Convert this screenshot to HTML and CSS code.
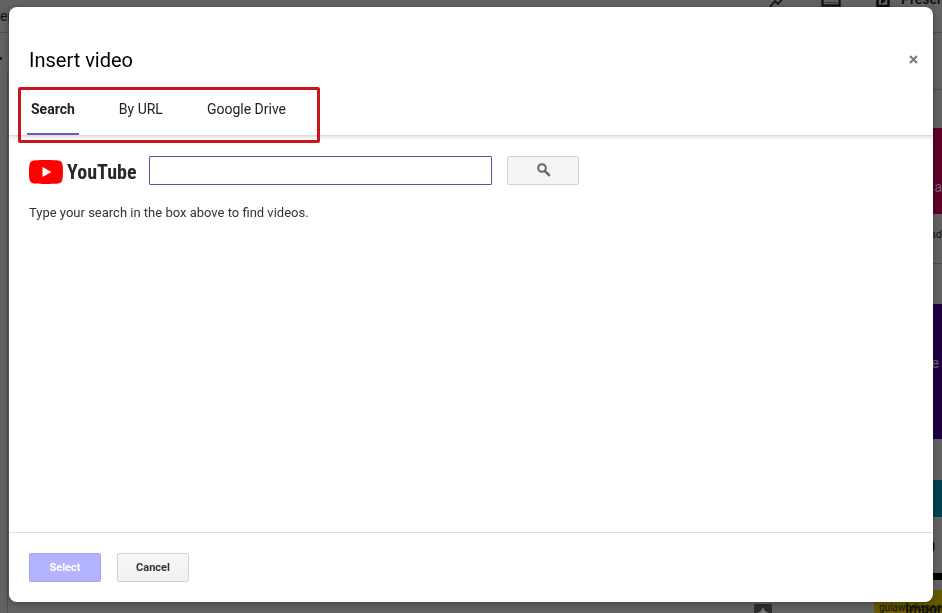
FILE: index.html
```html
<!DOCTYPE html>
<html lang="en">
<head>
    <meta charset="UTF-8">
    <meta name="viewport" content="width=device-width, initial-scale=1.0">
    <title>Insert video</title>
    <link rel="stylesheet" href="styles.css">
</head>
<body>
    <!-- Editor behind the dialog -->
    <div class="app" aria-hidden="true">
        <div class="app-menu">
            <span class="menu-text">er</span>
            <div class="menu-tools">
                <svg width="18" height="18" viewBox="0 0 18 18"><path d="M1 17l5-6 3 3 7-8M11 6h6" fill="none" stroke="#1c1c1c" stroke-width="2"/></svg>
                <svg width="20" height="18" viewBox="0 0 20 18"><path d="M1.500 3v12.500h17v-12.500M18.500 14v4" fill="none" stroke="#161616" stroke-width="2.500"/><path d="M4 12.500h12" stroke="#333"/></svg>
                <svg width="16" height="18" viewBox="0 0 16 18"><path d="M2.500 3h11v13h-11z" fill="none" stroke="#0c0c0c" stroke-width="2.500"/><path d="M6 8l5 3-5 3z" fill="#0c0c0c"/></svg>
                <span class="present">Present</span>
            </div>
        </div>
        <div class="app-toolbar"><span class="dot"></span></div>
        <div class="workspace">
            <div class="canvas">
                <div class="explore">
                    <svg width="18" height="18" viewBox="0 0 18 18"><rect width="18" height="18" rx="2" fill="#2b2b2b"/><path d="M9 3l2 4 4 2-4 2-2 4-2-4-4-2 4-2z" fill="#777"/></svg>
                </div>
            </div>
            <div class="themes">
                <div class="theme-title"></div>
                <div class="theme theme-pink">a</div>
                <div class="theme-name">ad</div>
                <div class="theme theme-purple">e</div>
                <div class="theme theme-teal"></div>
                <div class="theme theme-bar">0</div>
                <div class="watermark">
                    <span>guiaworkspace</span>
                    <span class="import">Impor</span>
                </div>
            </div>
        </div>
    </div>

    <div class="overlay">
        <div class="dialog" role="dialog" aria-labelledby="title">
            <div class="dialog-header">
                <div class="title-row">
                    <h1 id="title">Insert video</h1>
                    <button class="close" type="button" aria-label="Close">
                        <svg width="9" height="9" viewBox="0 0 9 9"><path d="M1 1l7 7M8 1L1 8" stroke="#777" stroke-width="2"/></svg>
                    </button>
                </div>
                <div class="tabs" role="tablist">
                    <button class="tab active" type="button" role="tab" aria-selected="true">Search</button>
                    <button class="tab" type="button" role="tab">By URL</button>
                    <button class="tab" type="button" role="tab">Google Drive</button>
                    <div class="highlight"></div>
                </div>
            </div>

            <div class="dialog-body">
                <form class="search">
                    <div class="logo">
                        <svg width="34" height="24" viewBox="0 0 34 24"><path d="M33.300 3.700A4.300 4.300 0 0 0 30.300 .7C27.600 0 17 0 17 0S6.400 0 3.700 .7A4.300 4.300 0 0 0 .7 3.700C0 6.400 0 12 0 12s0 5.600 .7 8.300a4.300 4.300 0 0 0 3 3C6.400 24 17 24 17 24s10.600 0 13.300-.7a4.300 4.300 0 0 0 3-3C34 17.600 34 12 34 12s0-5.600-.7-8.300z" fill="#f00"/><path d="M13.500 7v10l9-5z" fill="#fff"/></svg>
                        <span>YouTube</span>
                    </div>
                    <input class="search-box" type="text" aria-label="Search videos">
                    <button class="btn search-btn" type="button" aria-label="Search">
                        <svg width="14" height="14" viewBox="0 0 14 14"><circle cx="5" cy="5" r="3.800" fill="none" stroke="#666" stroke-width="2"/><path d="M7.800 7.800l5 5" stroke="#666" stroke-width="2.600"/></svg>
                    </button>
                </form>
                <p class="hint">Type your search in the box above to find videos.</p>
            </div>

            <div class="dialog-footer">
                <button class="btn select" type="button" disabled>Select</button>
                <button class="btn" type="button">Cancel</button>
            </div>
        </div>
    </div>
</body>
</html>
```
FILE: styles.css
```css
* {
    box-sizing: border-box;
}

body {
    margin: 0;
    font-family: Roboto, Arial, sans-serif;
    color: #222;
    background: #626262;
    overflow: hidden;
}

button, input {
    font-family: inherit;
}

/* Editor behind the dialog */
.app {
    display: flex;
    flex-direction: column;
    height: 100vh;
    overflow: hidden;
}

.app-menu {
    display: flex;
    justify-content: space-between;
    height: 33px;
    border-bottom: 1px solid #505050;
}

.menu-text {
    padding-top: 8px;
    font-size: 14px;
    color: #111;
}

.menu-tools {
    display: flex;
    align-items: flex-start;
    height: 18px;
    margin-top: -10px;
}

.menu-tools svg {
    margin-right: 34px;
}

.menu-tools svg:nth-child(3) {
    margin-right: 10px;
}

.present {
    width: 41px;
    font-size: 14px;
    font-weight: 500;
    line-height: 18px;
    color: #0c0c0c;
}

.app-toolbar {
    height: 38px;
    padding-top: 24px;
}

.dot {
    display: block;
    width: 2px;
    height: 3px;
    background: #222;
}

.workspace {
    display: flex;
    flex: 1;
    min-height: 0;
}

.canvas {
    display: flex;
    flex: 1;
    align-items: flex-end;
    justify-content: flex-end;
    margin-left: 7px;
    border-top: 1px solid #505050;
    border-left: 1px solid #505050;
}

.explore {
    height: 9px;
    margin-right: 102px;
}

.themes {
    width: 68px;
    text-align: right;
    color: #6f6378;
}

.theme-title {
    height: 19px;
    border-bottom: 1px solid #505050;
}

.theme {
    font-size: 14px;
}

.theme-pink {
    height: 86px;
    margin-top: 38px;
    padding-top: 51px;
    background: #5d0029;
}

.theme-name {
    height: 50px;
    padding-top: 14px;
    font-size: 11px;
    color: #111;
    border-bottom: 1px solid #4c4c4c;
}

.theme-purple {
    height: 135px;
    margin-top: 40px;
    padding: 51px 3px 0 0;
    background: #1e0042;
}

.theme-teal {
    height: 37px;
    margin-top: 41px;
    background: #00434f;
}

.theme-bar {
    height: 63px;
    padding: 22px 7px 0 0;
    color: #000;
    border-bottom: 7px solid #000;
}

.watermark {
    position: relative;
    height: 23px;
    margin-top: 10px;
    padding: 12px 0 0 5px;
    font-size: 10px;
    line-height: 12px;
    text-align: left;
    color: #111;
    background: #665800;
}

/* Heading that shows through the watermark */
.import {
    position: absolute;
    right: 0;
    bottom: -2px;
    font-size: 14px;
    font-weight: 500;
}

/* Dialog */
.overlay {
    position: fixed;
    inset: 0;
    display: flex;
    padding: 7px 9px 11px;
}

.dialog {
    display: flex;
    flex: 1;
    flex-direction: column;
    background: #fff;
    border-radius: 8px;
    box-shadow: 0 2px 6px rgba(0, 0, 0, 0.3);
}

.dialog-header {
    padding: 40px 15px 0 18px;
    border-bottom: 1px solid #ddd;
    box-shadow: 0 1px 4px rgba(0, 0, 0, 0.15);
}

.title-row {
    display: flex;
    justify-content: space-between;
    align-items: center;
    padding-left: 2px;
}

h1 {
    margin: 0;
    font-size: 20px;
    font-weight: 400;
    line-height: 26px;
    color: #000;
}

.close {
    display: flex;
    padding: 0 0 2px;
    border: none;
    background: none;
}

.tabs {
    display: flex;
    position: relative;
    gap: 36px;
    margin-top: 15px;
}

.tab {
    height: 47px;
    padding: 0 4px 4px;
    border: none;
    border-bottom: 2px solid transparent;
    background: none;
    font-size: 14px;
    color: #222;
}

.tab.active {
    font-weight: bold;
    border-color: #6a5cb8;
}

/* Red frame around the tabs */
.highlight {
    position: absolute;
    top: -1px;
    left: -9px;
    width: 302px;
    height: 56px;
    border: 3px solid #c9151c;
    border-radius: 2px;
    pointer-events: none;
}

.dialog-body {
    flex: 1;
    padding: 20px;
}

.search {
    display: flex;
    align-items: center;
}

.logo {
    display: flex;
    align-items: center;
    gap: 4px;
    width: 120px;
    padding-top: 3px;
    font-family: "Liberation Sans Narrow", "Roboto Condensed", Roboto, sans-serif;
    font-size: 20px;
    font-weight: bold;
    line-height: 24px;
    color: #282828;
}

.search-box {
    flex: 0 1 343px;
    min-width: 0;
    height: 29px;
    padding: 0 8px;
    border: 1px solid #5f50ae;
    border-radius: 1px;
    outline: none;
    font-size: 13px;
}

.btn {
    width: 72px;
    height: 29px;
    padding: 0;
    border: 1px solid #d3d3d3;
    border-radius: 2px;
    background: linear-gradient(#f7f7f7, #f1f1f1);
    font-size: 11px;
    font-weight: bold;
    color: #333;
}

.search-btn {
    margin-left: 15px;
    padding: 2px 0 0 2px;
    background: #f5f5f5;
}

.hint {
    margin: 18px 0 0;
    font-size: 13px;
    line-height: 20px;
    color: #333;
}

.dialog-footer {
    display: flex;
    gap: 16px;
    padding: 20px;
    border-top: 1px solid #e2e2e2;
}

.select {
    border-color: #a5a5ea;
    background: #b3b3ff;
    color: #fff;
}
```
